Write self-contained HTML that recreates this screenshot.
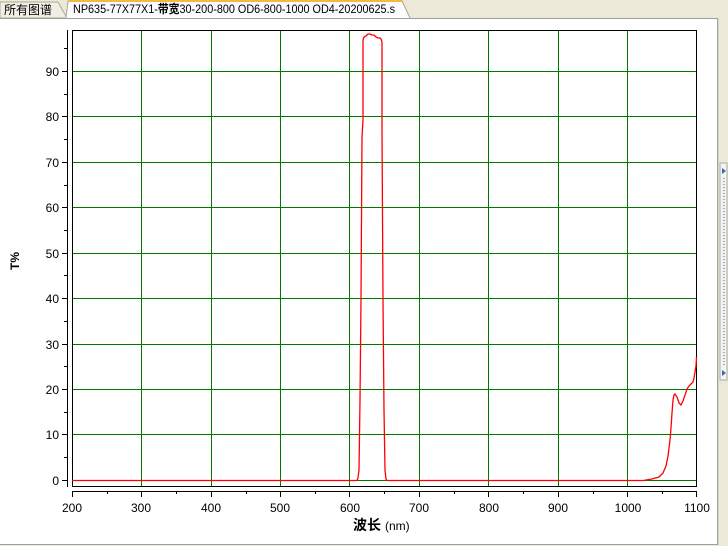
<!DOCTYPE html>
<html><head><meta charset="utf-8"><style>
html,body{margin:0;padding:0;width:728px;height:546px;overflow:hidden;background:#ece9d8;font-family:"Liberation Sans","Noto Sans CJK SC",sans-serif}
</style></head><body>
<svg width="728" height="546" xmlns="http://www.w3.org/2000/svg" style="position:absolute;left:0;top:0">
<rect x="0" y="0" width="728" height="546" fill="#ece9d8"/>
<path d="M0 2 H58 L67 18 H0 Z" fill="#f1efe4" stroke="#aca899"/>
<text x="4" y="14" font-size="12" fill="#000" font-family="'Noto Sans CJK SC',sans-serif">所有图谱</text>
<path d="M66 18 L68 1 H402 L410 18" fill="#fcfcfe" stroke="#aca899"/>
<rect x="69" y="0" width="333" height="2" fill="#f5b840"/>
<text x="73" y="13" font-size="12" fill="#000" font-family="'Liberation Sans','Noto Sans CJK SC',sans-serif" textLength="322" lengthAdjust="spacingAndGlyphs">NP635-77X77X1-<tspan font-weight="bold">带宽</tspan>30-200-800 OD6-800-1000 OD4-20200625.s</text>
<rect x="0" y="18" width="717" height="526" fill="#fff"/>
<line x1="0" y1="18.5" x2="717" y2="18.5" fill="none" stroke="#a0a0a0"/>
<line x1="717.5" y1="18" x2="717.5" y2="545" stroke="#a0a0a0"/>
<line x1="0" y1="544.5" x2="717" y2="544.5" stroke="#a0a0a0"/>
<line x1="718.5" y1="19" x2="718.5" y2="545" stroke="#d8d5c8"/>
<rect x="720" y="163" width="7" height="217" fill="#f4f3ee" stroke="#b0ad9f"/>
<polygon points="722,168 726,171 722,174" fill="#316ac5"/>
<polygon points="722,370 726,373 722,376" fill="#316ac5"/>
<line x1="724" y1="178" x2="724" y2="365" stroke="#316ac5" stroke-dasharray="1 2"/>
<g stroke="#007800" stroke-width="1">
<line x1="72" y1="71.5" x2="697" y2="71.5"/><line x1="72" y1="116.5" x2="697" y2="116.5"/>
<line x1="72" y1="162.5" x2="697" y2="162.5"/><line x1="72" y1="207.5" x2="697" y2="207.5"/>
<line x1="72" y1="253.5" x2="697" y2="253.5"/><line x1="72" y1="298.5" x2="697" y2="298.5"/>
<line x1="72" y1="344.5" x2="697" y2="344.5"/><line x1="72" y1="389.5" x2="697" y2="389.5"/>
<line x1="72" y1="434.5" x2="697" y2="434.5"/><line x1="72" y1="480.5" x2="697" y2="480.5"/>
<line x1="141.5" y1="30" x2="141.5" y2="487"/><line x1="211.5" y1="30" x2="211.5" y2="487"/>
<line x1="280.5" y1="30" x2="280.5" y2="487"/><line x1="349.5" y1="30" x2="349.5" y2="487"/>
<line x1="419.5" y1="30" x2="419.5" y2="487"/><line x1="488.5" y1="30" x2="488.5" y2="487"/>
<line x1="558.5" y1="30" x2="558.5" y2="487"/><line x1="627.5" y1="30" x2="627.5" y2="487"/>
</g>
<rect x="72.5" y="30.5" width="624" height="456" fill="none" stroke="#000"/>
<polyline fill="none" stroke="#f00" stroke-width="1.3" points="72,480.5 357,480.5 358,478 359,470 360,400 361,300 362,137 363,120 363,40 364,37 366,36 367,35 368,34 370,34 372,35 374,35 376,37 378,38 380,38 381,39 382,42 382,130 383,300 384,410 385,470 386,479 387,480.5 643,480.5 652,479 659,477 663,473 666,466 668,456 670,440 671,428 672,413 673,400 674,395 675,394 677,397 679,403 681,405 683,401 685,395 687,389 689,386 691,384 693,382 694,378 695,372 696,366 696.5,357"/>
<line x1="67.5" y1="30" x2="67.5" y2="487" stroke="#000"/>
<g stroke="#000">
<line x1="62" y1="71.5" x2="67" y2="71.5"/><line x1="62" y1="116.5" x2="67" y2="116.5"/><line x1="62" y1="162.5" x2="67" y2="162.5"/><line x1="62" y1="207.5" x2="67" y2="207.5"/><line x1="62" y1="253.5" x2="67" y2="253.5"/><line x1="62" y1="298.5" x2="67" y2="298.5"/><line x1="62" y1="344.5" x2="67" y2="344.5"/><line x1="62" y1="389.5" x2="67" y2="389.5"/><line x1="62" y1="434.5" x2="67" y2="434.5"/><line x1="62" y1="480.5" x2="67" y2="480.5"/>
<line x1="64" y1="48.5" x2="67" y2="48.5"/><line x1="64" y1="94.5" x2="67" y2="94.5"/><line x1="64" y1="139.5" x2="67" y2="139.5"/><line x1="64" y1="185.5" x2="67" y2="185.5"/><line x1="64" y1="230.5" x2="67" y2="230.5"/><line x1="64" y1="275.5" x2="67" y2="275.5"/><line x1="64" y1="321.5" x2="67" y2="321.5"/><line x1="64" y1="366.5" x2="67" y2="366.5"/><line x1="64" y1="412.5" x2="67" y2="412.5"/><line x1="64" y1="457.5" x2="67" y2="457.5"/>
</g>
<g font-size="12" fill="#000" text-anchor="end">
<text x="59" y="76">90</text><text x="59" y="121">80</text><text x="59" y="167">70</text><text x="59" y="212">60</text><text x="59" y="258">50</text><text x="59" y="303">40</text><text x="59" y="349">30</text><text x="59" y="394">20</text><text x="59" y="439">10</text><text x="59" y="485">0</text>
</g>
<text x="0" y="0" font-size="12" font-weight="bold" transform="translate(19,261) rotate(-90)" text-anchor="middle">T%</text>
<line x1="72" y1="491.5" x2="697" y2="491.5" stroke="#000"/>
<g stroke="#000">
<line x1="72.5" y1="491" x2="72.5" y2="497"/><line x1="141.5" y1="491" x2="141.5" y2="497"/><line x1="211.5" y1="491" x2="211.5" y2="497"/><line x1="280.5" y1="491" x2="280.5" y2="497"/><line x1="349.5" y1="491" x2="349.5" y2="497"/><line x1="419.5" y1="491" x2="419.5" y2="497"/><line x1="488.5" y1="491" x2="488.5" y2="497"/><line x1="558.5" y1="491" x2="558.5" y2="497"/><line x1="627.5" y1="491" x2="627.5" y2="497"/><line x1="696.5" y1="491" x2="696.5" y2="497"/>
<line x1="107.5" y1="491" x2="107.5" y2="494"/><line x1="176.5" y1="491" x2="176.5" y2="494"/><line x1="246.5" y1="491" x2="246.5" y2="494"/><line x1="315.5" y1="491" x2="315.5" y2="494"/><line x1="384.5" y1="491" x2="384.5" y2="494"/><line x1="454.5" y1="491" x2="454.5" y2="494"/><line x1="523.5" y1="491" x2="523.5" y2="494"/><line x1="593.5" y1="491" x2="593.5" y2="494"/><line x1="662.5" y1="491" x2="662.5" y2="494"/>
</g>
<g font-size="12" fill="#000" text-anchor="middle">
<text x="72" y="512">200</text><text x="141" y="512">300</text><text x="211" y="512">400</text><text x="280" y="512">500</text><text x="350" y="512">600</text><text x="419" y="512">700</text><text x="489" y="512">800</text><text x="558" y="512">900</text><text x="628" y="512">1000</text><text x="697" y="512">1100</text>
</g>
<text x="353" y="530" font-size="14" font-weight="bold" font-family="'Noto Sans CJK SC',sans-serif">波长</text>
<text x="385" y="530" font-size="12" fill="#000">(nm)</text>
</svg>
</body></html>
